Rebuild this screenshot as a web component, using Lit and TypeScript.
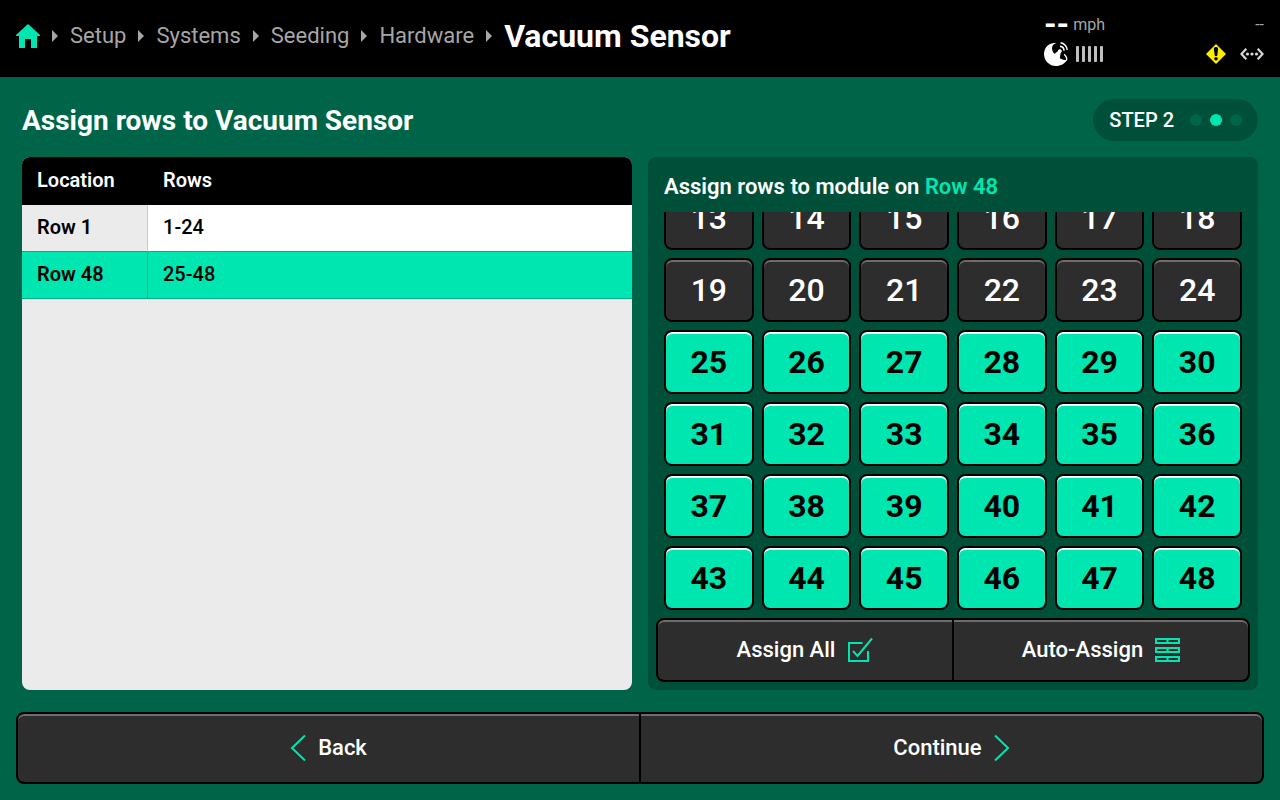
import { LitElement, html, css, svg } from "lit";
import { customElement, property, state } from "lit/decorators.js";
import { classMap } from "lit/directives/class-map.js";

interface Module {
  name: string;
  first: number;
  last: number;
}

const range = (from: number, to: number) => Array.from({ length: to - from + 1 }, (_, i) => from + i);

const homeIcon = html`<svg width="24" height="24" viewBox="0 0 24 24" aria-hidden="true">
  <path fill="#00e6b0" d="M12 0 24 11v1h-3v12h-6v-9H9v9H3V12H0v-1z" />
</svg>`;
const caretIcon = html`<svg class="caret" width="6" height="12" viewBox="0 0 6 12" aria-hidden="true">
  <path fill="#a6a6a6" d="M0 0 6 6 0 12z" />
</svg>`;
const satelliteIcon = html`<svg width="24" height="24" viewBox="0 0 24 24" aria-hidden="true">
  <path fill="#fff" d="M12 1.200C8 0 0 3.500 0 12a12 12 0 0 0 12 12c4.800 0 8.800-2.200 10.800-6C17 19 5.500 10.500 8.500 4 9.200 2.500 10.300 1.700 12 1.200z" />
  <path fill="#fff" d="M9.500 12.500 13.800 9.300A2 2 0 1 1 16.600 11L15.800 16.500 12.500 15.500z" />
  <path fill="none" stroke="#fff" stroke-width="1.300" d="M20.300 12.200c2 2.300 3 4.600 2 6-.6.700-1.700.8-3 .5" />
  <path fill="none" stroke="#fff" stroke-width="1.500" d="M16 4.200a4.500 4.500 0 0 1 4 4.600M16.500.8A7.500 7.500 0 0 1 23.200 8" />
</svg>`;
const signalIcon = html`<svg width="28" height="16" viewBox="0 0 28 16" aria-hidden="true">
  <g fill="#bfbfbf">
    ${[0, 6, 12, 18, 24].map((x) => svg`<rect x=${x} width="3" height="16" rx="1" />`)}
  </g>
</svg>`;
const alertIcon = html`<svg width="20" height="20" viewBox="0 0 20 20" aria-hidden="true">
  <path fill="#ffed00" d="M10 0 20 10 10 20 0 10z" />
  <path d="M7.900 5c0-1.400.8-2 2.100-2s2.100.6 2.100 2L11.200 12H8.800z" />
  <circle cx="10" cy="14.700" r="1.800" />
</svg>`;
const linkIcon = html`<svg width="24" height="12" viewBox="0 0 24 12" aria-hidden="true">
  <path fill="none" stroke="#d9d9d9" stroke-width="2.200" d="M6.300.8 1.400 6l4.900 5.200M17.700.8 22.600 6l-4.900 5.200" />
  <circle cx="7.500" cy="6" r="1.600" fill="#d9d9d9" />
  <circle cx="12" cy="6" r="1.600" fill="#d9d9d9" />
  <circle cx="16.500" cy="6" r="1.600" fill="#d9d9d9" />
</svg>`;
const checkIcon = html`<svg width="26" height="26" viewBox="0 0 26 26" aria-hidden="true">
  <path fill="none" stroke="#00e6b0" stroke-width="2" d="M15.500 6H2v18h19V14M6 14l4.500 5L25 1.500" />
</svg>`;
const rowsIcon = html`<svg width="25" height="24" viewBox="0 0 25 24" aria-hidden="true">
  <g fill="none" stroke="#00e6b0" stroke-width="2">
    ${[1, 10, 19].map((y) => svg`<path d="M1 ${y}h23v4H1zM12.500 ${y}v4" />`)}
  </g>
</svg>`;
const backIcon = html`<svg width="16" height="28" viewBox="0 0 16 28" aria-hidden="true">
  <path fill="none" stroke="#00e6b0" stroke-width="2" d="M15 1.500 2 14l13 12.500" />
</svg>`;
const nextIcon = html`<svg width="16" height="28" viewBox="0 0 16 28" aria-hidden="true">
  <path fill="none" stroke="#00e6b0" stroke-width="2" d="M1 1.500 14 14 1 26.500" />
</svg>`;

const base = css`
  * {
    box-sizing: border-box;
  }
  button {
    font: inherit;
    color: inherit;
    margin: 0;
    padding: 0;
    cursor: pointer;
  }
  svg {
    display: block;
    flex: none;
  }
`;

const buttonPair = css`
  .pair {
    display: grid;
    grid-template-columns: 1fr 1fr;
    gap: 2px;
    background: #000;
    border: 2px solid #000;
    border-radius: 8px;
    overflow: hidden;
  }
  .pair button {
    display: flex;
    align-items: center;
    justify-content: center;
    gap: 12px;
    border: 0;
    background: #2d2d2d;
    box-shadow: inset 0 2px 0 #6d6d6d;
    color: #fff;
    font-weight: 500;
    font-size: 22px;
    line-height: 28px;
  }
  .pair button:first-child {
    border-radius: 6px 0 0 6px;
  }
  .pair button:last-child {
    border-radius: 0 6px 6px 0;
  }
`;

@customElement("status-header")
export class StatusHeader extends LitElement {
  @property({ type: Array }) trail: string[] = [];
  @property() current = "";

  static styles = [
    base,
    css`
      :host {
        display: block;
      }
      .bar {
        display: flex;
        align-items: flex-start;
        justify-content: space-between;
        height: 77px;
        padding: 12px 16px;
        background: #000;
      }
      .crumbs {
        display: flex;
        align-items: center;
        height: 48px;
        font-size: 22px;
        line-height: 28px;
        white-space: nowrap;
      }
      .caret {
        margin: 0 12px;
      }
      a {
        color: #a6a6a6;
        text-decoration: none;
      }
      h1 {
        margin: 0;
        font-size: 32px;
        line-height: 36px;
        font-weight: 700;
        color: #fff;
      }
      .status {
        display: flex;
        width: 220px;
        justify-content: space-between;
        color: #a6a6a6;
      }
      .line {
        display: flex;
        align-items: center;
        gap: 8px;
        height: 24px;
        font-size: 16px;
      }
      .line + .line {
        margin-top: 6px;
      }
      .end {
        justify-content: flex-end;
      }
      .icons {
        gap: 14px;
      }
      .speed {
        color: #fff;
        font-size: 32px;
        font-weight: 700;
        line-height: 24px;
      }
      .unit {
        margin-left: -4px;
      }
    `,
  ];

  render() {
    return html`<header class="bar">
      <nav class="crumbs" aria-label="Breadcrumb">
        <a href="#home" aria-label="Home">${homeIcon}</a>${caretIcon}
        ${this.trail.map((t) => html`<a href="#${t.toLowerCase()}">${t}</a>${caretIcon}`)}
        <h1>${this.current}</h1>
      </nav>
      <div class="status">
        <div>
          <div class="line"><span class="speed">--</span><span class="unit">mph</span></div>
          <div class="line">${satelliteIcon}${signalIcon}</div>
        </div>
        <div>
          <div class="line end">--</div>
          <div class="line icons">${alertIcon}${linkIcon}</div>
        </div>
      </div>
    </header>`;
  }
}

@customElement("module-table")
export class ModuleTable extends LitElement {
  @property({ type: Array }) modules: Module[] = [];
  @property({ type: Number }) selected = 0;

  static styles = [
    base,
    css`
      :host {
        display: block;
        background: #ebebeb;
        border-radius: 8px;
        overflow: hidden;
      }
      table {
        width: 100%;
        border-collapse: separate;
        border-spacing: 0;
        table-layout: fixed;
        font-size: 20px;
        line-height: 24px;
        text-align: left;
        color: #000;
      }
      th,
      td {
        height: 47px;
        padding: 0 15px 2px;
      }
      thead th {
        height: 48px;
        background: #000;
        color: #fff;
        font-weight: 600;
      }
      .location {
        width: 126px;
      }
      tbody th {
        font-weight: 600;
        border-right: 1px solid #c8c8c8;
        border-bottom: 1px solid #c8c8c8;
      }
      tbody td {
        font-weight: 500;
        background: #fff;
        border-bottom: 1px solid #c8c8c8;
      }
      .before > *,
      .active > * {
        border-color: #00b086;
      }
      .active > * {
        background: #00e6b0;
      }
      .before > th {
        border-right-color: #c8c8c8;
      }
    `,
  ];

  render() {
    return html`<table>
      <thead>
        <tr>
          <th class="location" scope="col">Location</th>
          <th scope="col">Rows</th>
        </tr>
      </thead>
      <tbody>
        ${this.modules.map(
          (m, i) => html`<tr class=${classMap({ active: i === this.selected, before: i === this.selected - 1 })}>
            <th scope="row">${m.name}</th>
            <td>${m.first}-${m.last}</td>
          </tr>`
        )}
      </tbody>
    </table>`;
  }
}

@customElement("row-picker")
export class RowPicker extends LitElement {
  @property({ attribute: false }) module!: Module;
  @property({ type: Number }) total = 48;

  static styles = [
    base,
    buttonPair,
    css`
      :host {
        display: flex;
        flex-direction: column;
        min-height: 0;
        padding: 16px 8px 8px;
        background: #005039;
        border-radius: 8px;
      }
      h3 {
        margin: 0;
        padding: 0 8px 11px;
        font-size: 22px;
        line-height: 28px;
        font-weight: 600;
      }
      .target {
        color: #00e6b0;
      }
      .scroller {
        flex: 1;
        min-height: 0;
        overflow-y: auto;
        scrollbar-width: none;
        display: grid;
        grid-template-columns: repeat(6, 1fr);
        grid-auto-rows: 64px;
        gap: 8px;
        padding: 0 8px;
        margin-bottom: 8px;
      }
      .row {
        border: 2px solid #000;
        border-radius: 8px;
        background: #2d2d2d;
        box-shadow: inset 0 2px 0 #6d6d6d;
        color: #fff;
        font-size: 32px;
        font-weight: 500;
      }
      .row.on {
        background: #00e6b0;
        box-shadow: inset 0 2px 0 #fff;
        color: #000;
        font-weight: 700;
      }
      .pair {
        flex: none;
        height: 64px;
      }
    `,
  ];

  firstUpdated() {
    const scroller = this.renderRoot.querySelector(".scroller")!;
    requestAnimationFrame(() => (scroller.scrollTop = scroller.scrollHeight));
  }

  render() {
    const { name, first, last } = this.module;
    return html`<h3>Assign rows to module on <span class="target">${name}</span></h3>
      <div class="scroller">
        ${range(1, this.total).map((n) => {
          const on = n >= first && n <= last;
          return html`<button class=${classMap({ row: true, on })} aria-pressed=${on}>${n}</button>`;
        })}
      </div>
      <div class="pair">
        <button>Assign All ${checkIcon}</button>
        <button>Auto-Assign ${rowsIcon}</button>
      </div>`;
  }
}

@customElement("app-root")
export class AppRoot extends LitElement {
  @state() private selected = 1;
  private modules: Module[] = [
    { name: "Row 1", first: 1, last: 24 },
    { name: "Row 48", first: 25, last: 48 },
  ];

  static styles = [
    base,
    buttonPair,
    css`
      :host {
        display: flex;
        flex-direction: column;
        height: 100vh;
        background: #006548;
        color: #fff;
        font-family: Roboto, "Liberation Sans", sans-serif;
      }
      main {
        flex: 1;
        min-height: 0;
        display: flex;
        flex-direction: column;
        padding: 22px 22px;
      }
      .head {
        display: flex;
        align-items: center;
        justify-content: space-between;
        margin-bottom: 16px;
      }
      h2 {
        margin: 0;
        font-size: 28px;
        font-weight: 700;
      }
      .step {
        display: flex;
        align-items: center;
        gap: 16px;
        height: 42px;
        padding: 0 16px;
        border-radius: 21px;
        background: #005039;
        font-size: 20px;
        font-weight: 500;
      }
      .dots {
        display: flex;
        gap: 8px;
      }
      .dot {
        width: 12px;
        height: 12px;
        border-radius: 50%;
        background: #006548;
      }
      .dot.now {
        background: #00e6b0;
      }
      .panels {
        flex: 1;
        min-height: 0;
        display: grid;
        grid-template-columns: 1fr 1fr;
        grid-template-rows: minmax(0, 1fr);
        gap: 16px;
      }
      footer {
        padding: 0 16px 16px;
      }
      footer .pair {
        height: 72px;
      }
    `,
  ];

  render() {
    return html`<status-header
        .trail=${["Setup", "Systems", "Seeding", "Hardware"]}
        current="Vacuum Sensor"
      ></status-header>
      <main>
        <div class="head">
          <h2>Assign rows to Vacuum Sensor</h2>
          <div class="step">
            <span>STEP 2</span>
            <span class="dots">
              ${[1, 2, 3].map((n) => html`<span class=${classMap({ dot: true, now: n === 2 })}></span>`)}
            </span>
          </div>
        </div>
        <div class="panels">
          <module-table .modules=${this.modules} .selected=${this.selected}></module-table>
          <row-picker .module=${this.modules[this.selected]}></row-picker>
        </div>
      </main>
      <footer>
        <div class="pair">
          <button>${backIcon} Back</button>
          <button>Continue ${nextIcon}</button>
        </div>
      </footer>`;
  }
}
